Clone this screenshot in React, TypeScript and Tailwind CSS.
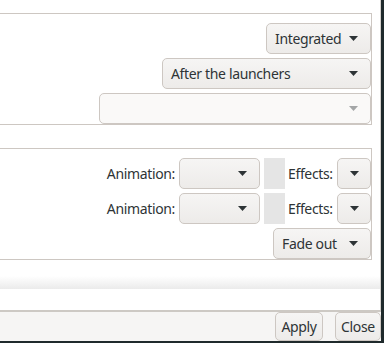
import React from 'react';

const font = { fontFamily: '"Noto Sans", "DejaVu Sans", sans-serif', letterSpacing: '-0.35px' };

const Arrow = ({ muted = false }: { muted?: boolean }) => (
  <svg width="9" height="5" viewBox="0 0 9 5" className="shrink-0">
    <path d="M0 0 L9 0 L4.5 5 Z" fill={muted ? '#a4a6a7' : '#2e3436'} />
  </svg>
);

const Combo = ({
  label,
  width,
  muted = false,
}: {
  label?: string;
  width: string;
  muted?: boolean;
}) => (
  <div
    className={`${width} h-[31px] flex items-center justify-between pl-[8px] pr-[12px] rounded-[5px] border border-[#cdc7c2] ${
      muted ? 'bg-[#faf9f8]' : 'bg-gradient-to-b from-[#f6f5f4] to-[#edebe9]'
    } text-[14px] text-[#2e3436]`}
  >
    <span>{label}</span>
    <Arrow muted={muted} />
  </div>
);

const AnimRow = () => (
  <div className="flex items-center justify-end h-[31px]">
    <span className="text-[14px] text-[#2e3436] mr-[4px]">Animation:</span>
    <Combo width="w-[81px]" />
    <div className="w-[21px] h-[31px] bg-[#e5e5e5] ml-[4px]" />
    <span className="w-[52px] pl-[3px] text-[14px] text-[#2e3436]">Effects:</span>
    <div className="w-[34px] h-[31px] flex items-center justify-center rounded-[5px] border border-[#cdc7c2] bg-gradient-to-b from-[#f6f5f4] to-[#edebe9]">
      <Arrow />
    </div>
  </div>
);

const Button = ({ children, width }: { children: React.ReactNode; width: string }) => (
  <div
    className={`${width} h-[29px] flex items-center justify-center rounded-[5px] border border-[#cdc7c2] bg-gradient-to-b from-[#f6f5f4] to-[#edebe9] text-[14px] text-[#2e3436]`}
  >
    {children}
  </div>
);

export default function App() {
  return (
    <div className="w-[384px] h-[343px] bg-[#1f2a2c] overflow-hidden" style={font}>
      <div className="w-[381px] h-[341px] flex flex-col bg-white">
        {/* scrolled settings area */}
        <div className="h-[310px] border-r border-[#d3d0cc] flex flex-col pt-[13px]">
          {/* panel 1 */}
          <div className="w-[373px] -ml-[1px] h-[112px] border border-[#cdc7c2] flex flex-col items-end gap-[4px] pt-[9px]">
            <Combo label="Integrated" width="w-[105px]" />
            <Combo label="After the launchers" width="w-[209px]" />
            <Combo width="w-[272px]" muted />
          </div>

          {/* panel 2 */}
          <div className="w-[373px] -ml-[1px] mt-[23px] h-[112px] border border-[#cdc7c2] flex flex-col items-stretch gap-[4px] pt-[9px]">
            <AnimRow />
            <AnimRow />
            <div className="flex justify-end">
              <Combo label="Fade out" width="w-[98px]" />
            </div>
          </div>

          <div className="h-[16px]" />
          <div className="h-[13px] bg-gradient-to-b from-white to-[#ebebeb]" />
        </div>

        {/* footer */}
        <div className="h-[2px] bg-[#cdc9c4]" />
        <div className="flex-1 bg-[#f6f5f4] flex items-start justify-end gap-[12px]">
          <Button width="w-[48px]">Apply</Button>
          <Button width="w-[46px]">Close</Button>
        </div>
      </div>
    </div>
  );
}
